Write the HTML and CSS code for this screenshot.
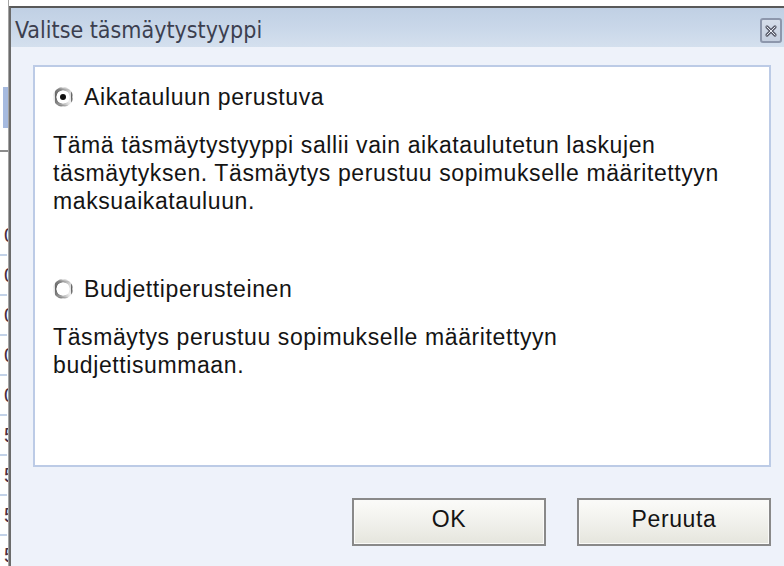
FILE: index.html
```html
<!DOCTYPE html>
<html lang="fi">
<head>
<meta charset="utf-8">
<title>Valitse täsmäytystyyppi</title>
<link rel="stylesheet" href="styles.css">
</head>
<body>
<div class="desk">
  <div class="behind">
    <div class="behind-tab"></div>
    <div class="behind-tick"></div>
    <div class="behind-rows">
      <div class="behind-row">0</div>
      <div class="behind-row">0</div>
      <div class="behind-row">0</div>
      <div class="behind-row">0</div>
      <div class="behind-row">0</div>
      <div class="behind-row">5</div>
      <div class="behind-row">5</div>
      <div class="behind-row">5</div>
      <div class="behind-row">5</div>
    </div>
  </div>
  <div class="dialog">
    <div class="titlebar">
      <span class="title">Valitse täsmäytystyyppi</span>
      <button class="close" aria-label="Sulje">
        <svg width="14" height="14" viewBox="0 0 14 14"><path d="M3 3 L11 11 M11 3 L3 11" stroke="#5b5e6c" stroke-width="3.2" stroke-linecap="round"/><path d="M3 3 L11 11 M11 3 L3 11" stroke="#e9edf4" stroke-width="1" stroke-linecap="round"/></svg>
      </button>
    </div>
    <div class="body">
      <div class="panel">
        <label class="option">
          <span class="radio checked"></span>
          <span class="option-label">Aikatauluun perustuva</span>
        </label>
        <p class="desc">Tämä täsmäytystyyppi sallii vain aikataulutetun laskujen<br>täsmäytyksen. Täsmäytys perustuu sopimukselle määritettyyn<br>maksuaikatauluun.</p>
        <label class="option option-second">
          <span class="radio"></span>
          <span class="option-label">Budjettiperusteinen</span>
        </label>
        <p class="desc">Täsmäytys perustuu sopimukselle määritettyyn<br>budjettisummaan.</p>
      </div>
      <div class="actions">
        <button class="btn">OK</button>
        <button class="btn">Peruuta</button>
      </div>
    </div>
  </div>
</div>
</body>
</html>
```

FILE: styles.css
```css
html, body {
  margin: 0;
  padding: 0;
  background: #ffffff;
}

body {
  width: 784px;
  height: 566px;
  overflow: hidden;
  font-family: "Liberation Sans", Arial, sans-serif;
}

.desk {
  display: flex;
  height: 566px;
}

/* strip of the page left of the dialog */
.behind {
  width: 8px;
  flex: none;
  border-right: 1px solid #a3a3a3;
  display: flex;
  flex-direction: column;
  overflow: hidden;
}

.behind > * {
  flex: none;
}

.behind-tab {
  margin: 87px 0 0 3px;
  width: 5px;
  height: 41px;
  background: #a6badf;
}

.behind-tick {
  margin-top: 22px;
  width: 8px;
  height: 2px;
  background: #8c8c8c;
}

.behind-rows {
  margin-top: 64px;
  display: flex;
  flex-direction: column;
}

.behind-row {
  height: 38px;
  line-height: 38px;
  padding-left: 4px;
  font-size: 20px;
  color: #4b2c3e;
  white-space: nowrap;
  border-bottom: 2px solid #c3d2e8;
  margin-right: 1px;
  flex: none;
}

.dialog {
  flex: 1;
  margin-top: 6px;
  border-top: 2px solid #595959;
  border-left: 2px solid #6b6b6b;
  background: #eef2fa;
  display: flex;
  flex-direction: column;
}

.titlebar {
  height: 39px;
  display: flex;
  align-items: center;
  justify-content: space-between;
  background: linear-gradient(to bottom, #c0d0e4 0%, #c9d7e9 50%, #d4e0ee 100%);
}

.title {
  font-family: "DejaVu Sans Condensed", "Liberation Sans", sans-serif;
  font-size: 23px;
  color: #3c3f4f;
  padding-left: 4px;
  margin-top: 5px;
}

.close {
  width: 22px;
  height: 25px;
  margin-right: 2px;
  margin-top: 6px;
  padding: 0;
  border: 2px solid #8d97ac;
  border-radius: 3px;
  background: linear-gradient(#d6deea, #c5cfdf);
  display: flex;
  align-items: center;
  justify-content: center;
}

.body {
  padding: 18px 13px 0 22px;
}

.panel {
  box-sizing: border-box;
  height: 402px;
  border: 2px solid #bccbe6;
  background: #ffffff;
  padding: 16px 0 0 18px;
  font-size: 23px;
  letter-spacing: 0.6px;
  color: #141414;
}

.option {
  display: flex;
  align-items: center;
  height: 28px;
}

.option-second {
  margin-top: 60px;
}

.radio {
  width: 16px;
  height: 16px;
  border-radius: 50%;
  border: 2px solid transparent;
  background:
    radial-gradient(circle, #ffffff 56%, transparent 60%),
    conic-gradient(from 200deg, #9a9a9a, #5f5f5f, #8a8a8a, #d8d8d8, #efefef, #9a9a9a);
  position: relative;
  flex: none;
}

.radio.checked::after {
  content: "";
  position: absolute;
  left: 5px;
  top: 5px;
  width: 6px;
  height: 6px;
  border-radius: 50%;
  background: #0e0e0e;
}

.option-label {
  margin-left: 11px;
}

.desc {
  margin: 20px 0 0;
  line-height: 28px;
  white-space: nowrap;
}

.actions {
  display: flex;
  justify-content: flex-end;
  gap: 31px;
  margin-top: 31px;
}

.btn {
  width: 194px;
  height: 48px;
  border: 2px solid #898989;
  box-shadow: inset 0 0 0 1px #fafaf8;
  background: linear-gradient(to bottom, #fbfbf9 0%, #f1f1ec 50%, #e5e5dd 100%);
  font-family: "Liberation Sans", Arial, sans-serif;
  font-size: 23px;
  letter-spacing: 0.6px;
  color: #141414;
  padding: 0 0 5px;
}
```
